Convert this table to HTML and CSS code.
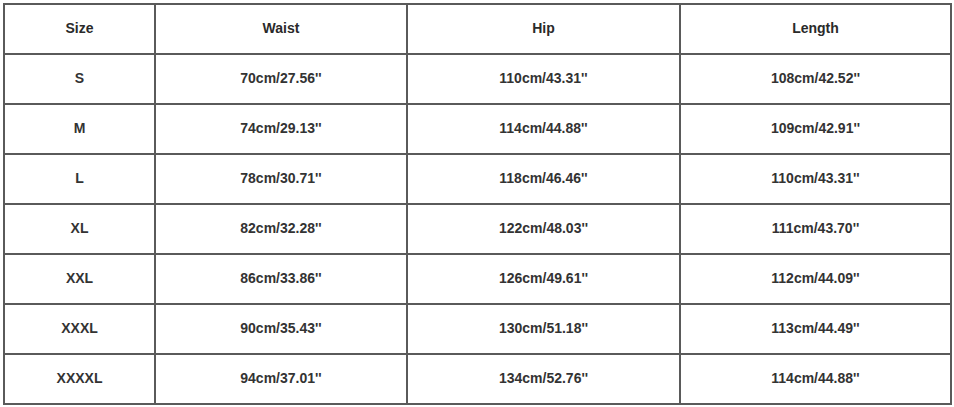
FILE: index.html
```html
<!DOCTYPE html>
<html>
<head>
<meta charset="utf-8">
<link rel="stylesheet" href="styles.css">
</head>
<body>
<table class="size-table">
  <colgroup>
    <col class="c1"><col class="c2"><col class="c3"><col class="c4">
  </colgroup>
  <thead>
    <tr><th>Size</th><th>Waist</th><th>Hip</th><th>Length</th></tr>
  </thead>
  <tbody>
    <tr><td>S</td><td>70cm/27.56''</td><td>110cm/43.31''</td><td>108cm/42.52''</td></tr>
    <tr><td>M</td><td>74cm/29.13''</td><td>114cm/44.88''</td><td>109cm/42.91''</td></tr>
    <tr><td>L</td><td>78cm/30.71''</td><td>118cm/46.46''</td><td>110cm/43.31''</td></tr>
    <tr><td>XL</td><td>82cm/32.28''</td><td>122cm/48.03''</td><td>111cm/43.70''</td></tr>
    <tr><td>XXL</td><td>86cm/33.86''</td><td>126cm/49.61''</td><td>112cm/44.09''</td></tr>
    <tr><td>XXXL</td><td>90cm/35.43''</td><td>130cm/51.18''</td><td>113cm/44.49''</td></tr>
    <tr><td>XXXXL</td><td>94cm/37.01''</td><td>134cm/52.76''</td><td>114cm/44.88''</td></tr>
  </tbody>
</table>
</body>
</html>
```
FILE: styles.css
```css
html, body {
  margin: 0;
  padding: 0;
  background: #ffffff;
}
.size-table {
  border-collapse: collapse;
  table-layout: fixed;
  width: 949px;
  margin: 3px 0 0 3px;
  font-family: "Liberation Sans", Arial, sans-serif;
  font-size: 14px;
  color: #333333;
}
.c1 { width: 151px; }
.c2 { width: 252px; }
.c3 { width: 273px; }
.c4 { width: 271px; }
.size-table th,
.size-table td {
  border: 2px solid #5a5a5a;
  height: 46px;
  padding: 0 0 2px 0;
  text-align: center;
  vertical-align: middle;
  font-weight: bold;
}
.size-table th {
  color: #2a2a2a;
}
```
